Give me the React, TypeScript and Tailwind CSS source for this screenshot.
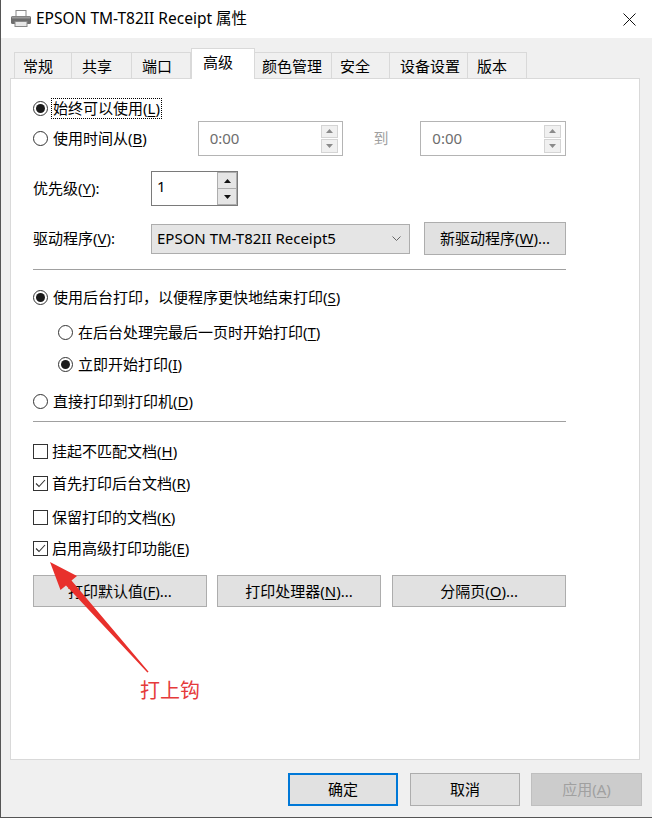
import React from 'react';

const tabs = [
  { label: '常规', cls: 'w-[58px] pl-[8px] border-l' },
  { label: '共享', cls: 'w-[60px] pl-[10px]' },
  { label: '端口', cls: 'w-[59px] pl-[10px]' },
  { label: '高级', cls: 'w-[64px] pl-[11px]', active: true },
  { label: '颜色管理', cls: 'w-[77px] pl-[7px]' },
  { label: '安全', cls: 'w-[58px] pl-[8px]' },
  { label: '设备设置', cls: 'w-[78px] pl-[10px]' },
  { label: '版本', cls: 'w-[59px] pl-[9px]' },
];

function Radio({ checked }: { checked?: boolean }) {
  return (
    <span className="flex h-[15px] w-[15px] shrink-0 items-center justify-center rounded-full border border-[#333]">
      {checked && <span className="h-[9px] w-[9px] rounded-full bg-[#1a1a1a]" />}
    </span>
  );
}

function Check({ checked }: { checked?: boolean }) {
  return (
    <span className="flex h-[15px] w-[15px] shrink-0 items-center justify-center border border-[#333]">
      {checked && (
        <svg width="13" height="13" viewBox="0 0 13 13">
          <path d="M2 6.5 L5 9.5 L11 3" fill="none" stroke="#333" strokeWidth="1.1" />
        </svg>
      )}
    </span>
  );
}

function Arrow({ up, color }: { up?: boolean; color: string }) {
  return (
    <svg width="7" height="4" viewBox="0 0 7 4">
      <polygon points={up ? '0,4 3.5,0 7,4' : '0,0 3.5,4 7,0'} fill={color} />
    </svg>
  );
}

function Key({ k }: { k: string }) {
  return <span className="underline underline-offset-2">{k}</span>;
}

function TimeBox() {
  return (
    <div className="flex h-[35px] w-[146px] items-center border border-[#b4b4b4] bg-white">
      <span className="ml-[11px] flex-1 text-[#6d6d6d]">0:00</span>
      <div className="mr-[4px] flex h-[28px] w-[17px] flex-col gap-[1px]">
        <div className="flex flex-1 items-center justify-center border border-[#d4d4d4] bg-[#f0f0f0]">
          <Arrow up color="#8a8a8a" />
        </div>
        <div className="flex flex-1 items-center justify-center border border-[#d4d4d4] bg-[#f0f0f0]">
          <Arrow color="#8a8a8a" />
        </div>
      </div>
    </div>
  );
}

function Btn({ children, cls }: { children: React.ReactNode; cls: string }) {
  return (
    <div className={`flex items-center justify-center border border-[#adadad] bg-[#e1e1e1] ${cls}`}>
      {children}
    </div>
  );
}

export default function App() {
  return (
    <div className="relative flex h-[818px] w-[652px] flex-col overflow-hidden border-b border-l border-[#555] bg-[#f0f0f0] font-['Noto_Sans','Noto_Sans_CJK_SC',sans-serif] text-[15px] text-black">
      {/* title bar */}
      <div className="flex h-[38px] shrink-0 items-center bg-white">
        <svg className="ml-[9px]" width="22" height="20" viewBox="0 0 22 20">
          <rect x="6" y="1.5" width="10" height="6" fill="#fff" stroke="#8a8a8a" />
          <rect x="1" y="7" width="20" height="8" rx="1.5" fill="#6e6e6e" />
          <rect x="2" y="7.5" width="18" height="2" fill="#9a9a9a" />
          <rect x="5" y="12.5" width="12" height="5" fill="#e8e8e8" stroke="#8a8a8a" />
        </svg>
        <span className="ml-[4px] text-[15.5px]">EPSON TM-T82II Receipt 属性</span>
        <svg className="ml-auto mr-[16px]" width="13" height="13" viewBox="0 0 13 13">
          <path d="M0.5 0.5 L12.5 12.5 M12.5 0.5 L0.5 12.5" stroke="#111" strokeWidth="1" />
        </svg>
      </div>

      {/* tabs */}
      <div className="mt-[10px] flex h-[30px] shrink-0 items-end pl-[13px]">
        {tabs.map((t) =>
          t.active ? (
            <div
              key={t.label}
              className={`relative z-10 -mb-[1px] h-[31px] border-x border-t border-[#d9d9d9] bg-white pt-[2px] ${t.cls}`}
            >
              {t.label}
            </div>
          ) : (
            <div
              key={t.label}
              className={`h-[26px] border-r border-t border-[#d9d9d9] bg-[#f0f0f0] pt-[2px] leading-[22px] ${t.cls}`}
            >
              {t.label}
            </div>
          )
        )}
      </div>

      {/* panel */}
      <div className="ml-[9px] flex h-[682px] w-[630px] shrink-0 flex-col border border-[#d9d9d9] bg-white pl-[22px] pt-[18px]">
        <div className="flex w-[533px] flex-col">
          <div className="flex h-[22px] items-center">
            <Radio checked />
            <span className="ml-[3px] border border-dotted border-black px-[1px] leading-[19px]">
              始终可以使用(<Key k="L" />)
            </span>
          </div>

          <div className="mt-[2px] flex h-[35px] items-center">
            <div className="flex w-[165px] items-center">
              <Radio />
              <span className="ml-[5px]">
                使用时间从(<Key k="B" />)
              </span>
            </div>
            <TimeBox />
            <span className="w-[77px] pl-[30px] text-[#a0a0a0]">到</span>
            <TimeBox />
          </div>

          <div className="mt-[15px] flex h-[35px] items-center">
            <span className="w-[118px]">
              优先级(<Key k="Y" />):
            </span>
            <div className="flex h-[35px] w-[87px] border border-[#7a7a7a] bg-white">
              <span className="ml-[5px] flex-1 pt-[3px]">1</span>
              <div className="flex w-[20px] flex-col">
                <div className="flex flex-1 items-center justify-center border border-[#adadad] bg-[#e5e5e5]">
                  <Arrow up color="#111" />
                </div>
                <div className="flex flex-1 items-center justify-center border border-t-0 border-[#adadad] bg-[#e5e5e5]">
                  <Arrow color="#111" />
                </div>
              </div>
            </div>
          </div>

          <div className="mt-[16px] flex h-[33px] items-center">
            <span className="w-[118px]">
              驱动程序(<Key k="V" />):
            </span>
            <div className="flex h-[30px] w-[259px] items-center border border-[#adadad] bg-[#e5e5e5]">
              <span className="ml-[5px] flex-1">EPSON TM-T82II Receipt5</span>
              <svg className="mr-[8px]" width="9" height="5" viewBox="0 0 9 5">
                <path d="M0.5 0.5 L4.5 4.5 L8.5 0.5" fill="none" stroke="#666" />
              </svg>
            </div>
            <Btn cls="ml-[14px] h-[33px] w-[142px]">
              新驱动程序(<Key k="W" />)...
            </Btn>
          </div>

          <div className="mt-[14px] h-px bg-[#a0a0a0]" />

          <div className="mt-[16px] flex h-[22px] items-center">
            <Radio checked />
            <span className="ml-[5px]">
              使用后台打印，以便程序更快地结束打印(<Key k="S" />)
            </span>
          </div>
          <div className="mt-[13px] flex h-[22px] items-center pl-[25px]">
            <Radio />
            <span className="ml-[5px]">
              在后台处理完最后一页时开始打印(<Key k="T" />)
            </span>
          </div>
          <div className="mt-[10px] flex h-[22px] items-center pl-[25px]">
            <Radio checked />
            <span className="ml-[5px]">
              立即开始打印(<Key k="I" />)
            </span>
          </div>
          <div className="mt-[15px] flex h-[22px] items-center">
            <Radio />
            <span className="ml-[5px]">
              直接打印到打印机(<Key k="D" />)
            </span>
          </div>

          <div className="mt-[9px] h-px bg-[#a0a0a0]" />

          <div className="mt-[18px] flex h-[22px] items-center">
            <Check />
            <span className="ml-[4px]">
              挂起不匹配文档(<Key k="H" />)
            </span>
          </div>
          <div className="mt-[10px] flex h-[22px] items-center">
            <Check checked />
            <span className="ml-[4px]">
              首先打印后台文档(<Key k="R" />)
            </span>
          </div>
          <div className="mt-[12px] flex h-[22px] items-center">
            <Check />
            <span className="ml-[4px]">
              保留打印的文档(<Key k="K" />)
            </span>
          </div>
          <div className="mt-[9px] flex h-[22px] items-center">
            <Check checked />
            <span className="ml-[4px]">
              启用高级打印功能(<Key k="E" />)
            </span>
          </div>

          <div className="mt-[16px] flex h-[32px]">
            <Btn cls="h-[32px] w-[174px]">
              打印默认值(<Key k="F" />)...
            </Btn>
            <Btn cls="ml-[10px] h-[32px] w-[165px]">
              打印处理器(<Key k="N" />)...
            </Btn>
            <Btn cls="ml-[11px] h-[32px] w-[174px]">
              分隔页(<Key k="O" />)...
            </Btn>
          </div>

          <div className="ml-[107px] mt-[71px] text-[20px] leading-[26px] text-[#e53a3a]">打上钩</div>
        </div>
      </div>

      {/* dialog buttons */}
      <div className="mt-[13px] flex justify-end pr-[10px]">
        <div className="flex h-[33px] w-[110px] items-center justify-center border-2 border-[#0078d7] bg-[#e1e1e1]">
          确定
        </div>
        <Btn cls="ml-[12px] h-[33px] w-[110px]">取消</Btn>
        <div className="ml-[11px] flex h-[33px] w-[111px] items-center justify-center border border-[#bfbfbf] bg-[#cccccc] text-[#a0a0a0]">
          应用(<Key k="A" />)
        </div>
      </div>

      {/* annotation arrow */}
      <svg
        className="pointer-events-none absolute left-[44px] top-[555px]"
        width="110"
        height="122"
        viewBox="45 555 110 122"
      >
        <polygon
          points="50,562 77,576 71.5,580.5 148.6,671.7 147.4,672.5 66,585.5 60.5,590"
          fill="#e8302c"
        />
      </svg>
    </div>
  );
}
